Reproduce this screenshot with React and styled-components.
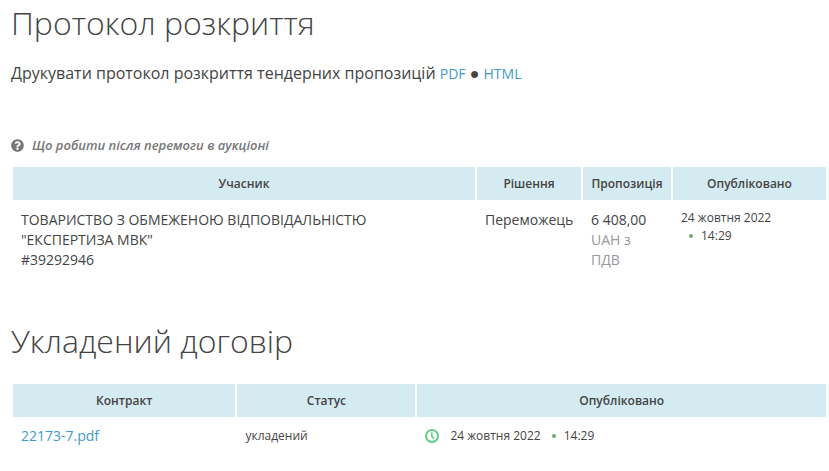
import React from "react";
import styled, { createGlobalStyle } from "styled-components";
import { FaQuestionCircle } from "react-icons/fa";

const GlobalStyle = createGlobalStyle`
  * { box-sizing: border-box; }
  body {
    margin: 0;
    background: #fff;
    color: #444;
    font-family: "Open Sans", "Noto Sans", sans-serif;
    font-size: 14px;
    line-height: 20px;
  }
`;

const Page = styled.main`
  padding: 1px 1px 0 11px;
`;

const Heading = styled.h2`
  margin: 0;
  font-size: 32px;
  font-weight: 300;
  line-height: 44px;
`;

const PrintLine = styled.p`
  margin: 16px 0 0;
  font-size: 16px;
  line-height: 24px;
`;

const Link = styled.a`
  color: #3f9acb;
  font-size: 14px;
  text-decoration: none;
`;

const Hint = styled.p`
  display: flex;
  align-items: center;
  gap: 8px;
  margin: 49px 0 0;
  color: #777;
  font-size: 13px;
  font-style: italic;
  font-weight: 600;
`;

const Table = styled.table`
  width: 100%;
  table-layout: fixed;
  border-collapse: separate;
  border-spacing: 2px 0;
  margin-top: ${(p) => p.$top}px;
`;

const Col = styled.col`
  width: ${(p) => p.$width};
`;

const Th = styled.th`
  height: 33px;
  padding: 0;
  background: #d5ebf2;
  font-size: 12px;
  font-weight: 600;
`;

const Td = styled.td`
  padding: ${(p) => (p.$compact ? 9 : 10)}px 0 0 8px;
  vertical-align: top;
  font-size: ${(p) => (p.$small ? 12 : 14)}px;
  line-height: ${(p) => (p.$tight ? 18 : 20)}px;
`;

const Muted = styled.div`
  color: #999;
`;

const Time = styled.div`
  display: flex;
  align-items: center;
  gap: 8px;
  margin-left: ${(p) => p.$left}px;
  &::before {
    content: "";
    width: 4px;
    height: 4px;
    border-radius: 50%;
    background: #6fa870;
  }
`;

const Stamp = styled.div`
  display: flex;
  align-items: center;
`;

const ClockSvg = styled.svg`
  width: 14px;
  height: 14px;
  margin-right: 11px;
`;

const Clock = () => (
  <ClockSvg viewBox="0 0 14 14" fill="none" stroke="#62d080" strokeWidth="2" aria-hidden="true">
    <circle cx="7" cy="7" r="6" />
    <path d="M6.8 3.2v4l2.3 2.4" strokeWidth="1.6" />
  </ClockSvg>
);

const Section = styled.section`
  margin-top: ${(p) => p.$top}px;
`;

export default function App() {
  return (
    <Page>
      <GlobalStyle />
      <Section $top={0}>
        <Heading>Протокол розкриття</Heading>
        <PrintLine>
          Друкувати протокол розкриття тендерних пропозицій <Link href="#pdf">PDF</Link> ●{" "}
          <Link href="#html">HTML</Link>
        </PrintLine>
        <Hint>
          <FaQuestionCircle size={13} aria-hidden="true" />
          Що робити після перемоги в аукціоні
        </Hint>
        <Table $top={12}>
          <colgroup>
            <Col />
            <Col $width="104px" />
            <Col $width="88px" />
            <Col $width="153px" />
          </colgroup>
          <thead>
            <tr>
              <Th scope="col">Учасник</Th>
              <Th scope="col">Рішення</Th>
              <Th scope="col">Пропозиція</Th>
              <Th scope="col">Опубліковано</Th>
            </tr>
          </thead>
          <tbody>
            <tr>
              <Td>
                ТОВАРИСТВО З ОБМЕЖЕНОЮ ВІДПОВІДАЛЬНІСТЮ
                <br />
                "ЕКСПЕРТИЗА МВК"
                <br />
                #39292946
              </Td>
              <Td>Переможець</Td>
              <Td>
                6 408,00
                <Muted>
                  UAH з<br />
                  ПДВ
                </Muted>
              </Td>
              <Td $small $tight $compact>
                <div>24 жовтня 2022</div>
                <Time $left={8}>14:29</Time>
              </Td>
            </tr>
          </tbody>
        </Table>
      </Section>
      <Section $top={49}>
        <Heading>Укладений договір</Heading>
        <Table $top={21}>
          <colgroup>
            <Col $width="27.5%" />
            <Col $width="22%" />
            <Col />
          </colgroup>
          <thead>
            <tr>
              <Th scope="col">Контракт</Th>
              <Th scope="col">Статус</Th>
              <Th scope="col">Опубліковано</Th>
            </tr>
          </thead>
          <tbody>
            <tr>
              <Td $compact>
                <Link href="#contract">22173-7.pdf</Link>
              </Td>
              <Td $small $compact>укладений</Td>
              <Td $small $compact>
                <Stamp>
                  <Clock />
                  <div>24 жовтня 2022</div>
                  <Time $left={11}>14:29</Time>
                </Stamp>
              </Td>
            </tr>
          </tbody>
        </Table>
      </Section>
    </Page>
  );
}
